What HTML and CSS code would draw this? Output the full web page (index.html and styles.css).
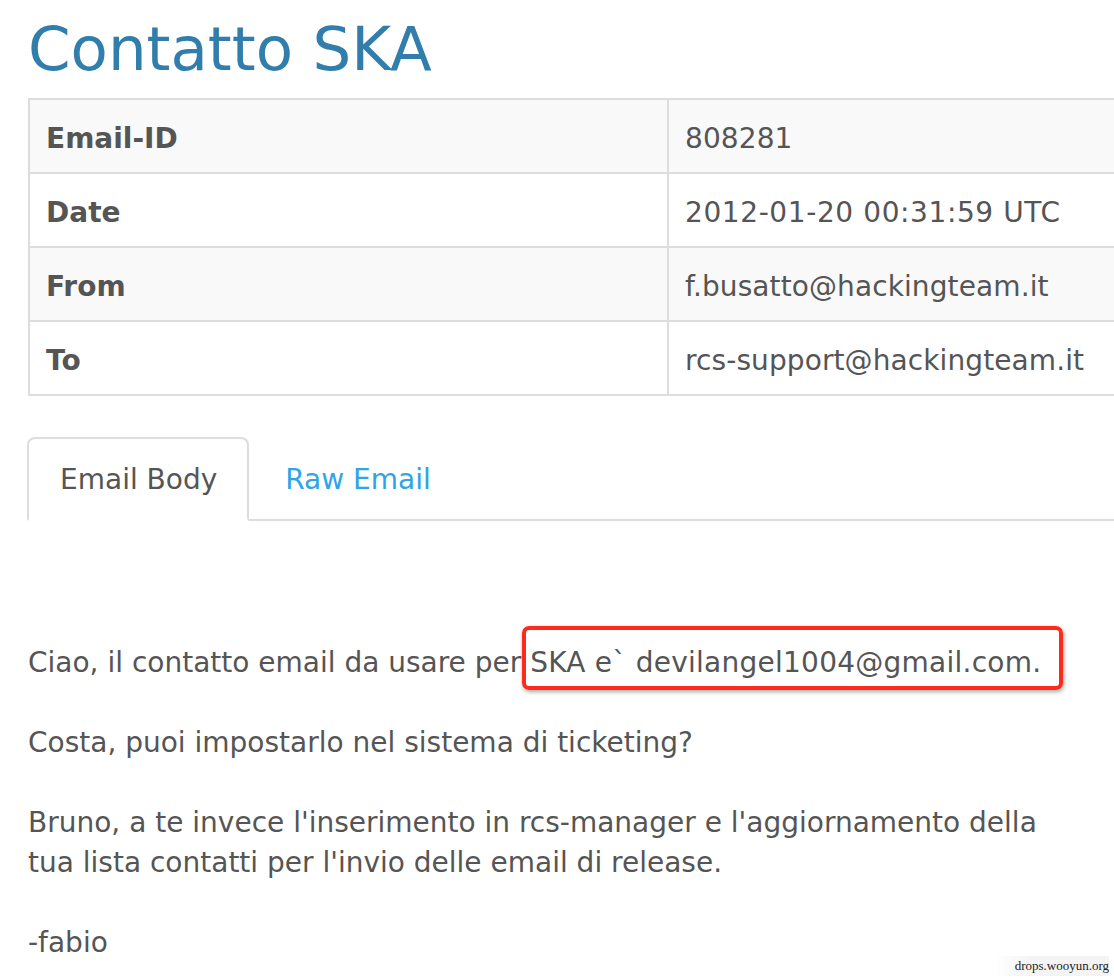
FILE: index.html
```html
<!DOCTYPE html>
<html>
<head>
<meta charset="utf-8">
<link rel="stylesheet" href="styles.css">
</head>
<body>
<div class="page">
  <h1 class="title">Contatto SKA</h1>
  <table class="meta">
    <colgroup><col class="col-label"><col class="col-value"></colgroup>
    <tbody>
      <tr class="striped"><th>Email-ID</th><td>808281</td></tr>
      <tr><th>Date</th><td class="num">2012-01-20 00:31:59 UTC</td></tr>
      <tr class="striped"><th>From</th><td>f.busatto@hackingteam.it</td></tr>
      <tr><th>To</th><td>rcs-support@hackingteam.it</td></tr>
    </tbody>
  </table>
  <ul class="tabs">
    <li class="tab active"><a>Email Body</a></li>
    <li class="tab"><a class="link">Raw Email</a></li>
  </ul>
  <div class="body">
    <div class="line">Ciao, il contatto email da usare per <span class="marked">SKA e` devilangel1004@gmail.com.</span></div>
    <div class="line blank"></div>
    <div class="line">Costa, puoi impostarlo nel sistema di ticketing?</div>
    <div class="line blank"></div>
    <div class="line">Bruno, a te invece l'inserimento in rcs-manager e l'aggiornamento della</div>
    <div class="line">tua lista contatti per l'invio delle email di release.</div>
    <div class="line blank"></div>
    <div class="line">-fabio</div>
  </div>
</div>
<div class="watermark">drops.wooyun.org</div>
</body>
</html>
```
FILE: styles.css
```css
html, body {
  margin: 0;
  padding: 0;
  background: #ffffff;
  overflow: hidden;
  height: 978px;
}
body {
  font-family: "DejaVu Sans", Verdana, sans-serif;
  color: #555555;
  position: relative;
}
.page {
  padding: 0 0 0 28px;
}
.title {
  margin: 0;
  padding-top: 13px;
  font-size: 61px;
  line-height: 72px;
  font-weight: normal;
  color: #317eac;
  height: 85px;
}
.meta {
  border-collapse: collapse;
  table-layout: fixed;
  width: 1200px;
  font-size: 28px;
  line-height: 40px;
}
.col-label { width: 639px; }
.meta th, .meta td {
  border: 2px solid #dddddd;
  padding: 19px 16px 13px 16px;
  text-align: left;
  vertical-align: top;
  white-space: nowrap;
}
.meta th { font-weight: bold; }
.meta td { letter-spacing: 0.1px; }
.meta td.num { letter-spacing: 0.6px; }
.striped { background: #f9f9f9; }
.tabs {
  list-style: none;
  margin: 41px 0 0 0;
  padding: 0;
  display: flex;
  border-bottom: 2px solid #dddddd;
  font-size: 28px;
  line-height: 40px;
}
.tab {
  margin-bottom: -2px;
  margin-right: 4px;
}
.tab a {
  display: block;
  padding: 21px 30px 19px 30px;
  border: 2px solid transparent;
  border-radius: 8px 8px 0 0;
}
.tab.active a {
  color: #555555;
  border-color: #dddddd;
  border-bottom-color: #ffffff;
  background: #ffffff;
  padding-left: 31px;
  margin-left: -1px;
}
.link { color: #2fa4e7; }
.body {
  padding-top: 122px;
  font-size: 28px;
  line-height: 40px;
}
.line { height: 40px; white-space: nowrap; }
.marked { position: relative; letter-spacing: 0.25px; }
.marked::after {
  content: "";
  position: absolute;
  left: -8px;
  right: -22px;
  top: -20px;
  bottom: -11px;
  border: 4px solid #fe2a1c;
  border-radius: 7px;
  box-shadow: 1px 2px 4px rgba(0,0,0,0.35);
}
.watermark {
  position: absolute;
  right: 5px;
  bottom: 2px;
  padding: 2px 0 2px 20px;
  font-family: "Liberation Serif", "Times New Roman", serif;
  font-size: 13px;
  color: #222222;
  background: linear-gradient(to right, rgba(255,255,255,0), #f4f4f4 30%);
}
```
